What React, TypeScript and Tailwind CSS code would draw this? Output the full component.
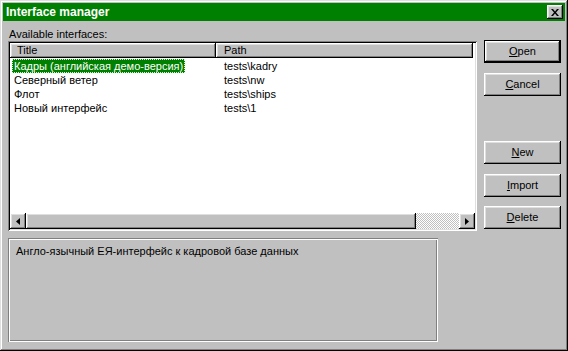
import React from 'react';

const raised =
    'shadow-[inset_-1px_-1px_#000,inset_1px_1px_#fff,inset_-2px_-2px_#808080,inset_2px_2px_#dfdfdf]';
const sunken =
    'shadow-[inset_1px_1px_#808080,inset_-1px_-1px_#fff,inset_2px_2px_#000,inset_-2px_-2px_#dfdfdf]';
const etched =
    'shadow-[inset_1px_1px_#808080,inset_-1px_-1px_#fff,inset_2px_2px_#fff,inset_-2px_-2px_#808080]';

const rows = [
    { title: 'Кадры (английская демо-версия)', path: 'tests\\kadry' },
    { title: 'Северный ветер', path: 'tests\\nw' },
    { title: 'Флот', path: 'tests\\ships' },
    { title: 'Новый интерфейс', path: 'tests\\1' },
];

const Button = ({ first, rest, isDefault, className }: { first: string; rest: string; isDefault?: boolean; className?: string }) => (
    <div className={`h-[23px] w-[77px] ${isDefault ? 'border border-black' : ''} ${className ?? ''}`}>
        <div className={`w-full h-full flex items-center justify-center bg-[#c0c0c0] ${raised}`}>
            <span>
                <u className="underline-offset-[1px]">{first}</u>
                {rest}
            </span>
        </div>
    </div>
);

const Arrow = ({ dir }: { dir: 'left' | 'right' }) => (
    <div className={`w-[16px] h-[16px] flex items-center justify-center bg-[#c0c0c0] ${raised}`}>
        <svg width="4" height="7" viewBox="0 0 4 7">
            {dir === 'left' ? <polygon points="4,0 4,7 0,3.5" fill="#000" /> : <polygon points="0,0 0,7 4,3.5" fill="#000" />}
        </svg>
    </div>
);

const App = () => {
    return (
        <div
            className={`w-[568px] h-[351px] bg-[#c0c0c0] p-[3px] flex flex-col text-[11px] text-black shadow-[inset_-1px_-1px_#000,inset_1px_1px_#dfdfdf,inset_-2px_-2px_#808080,inset_2px_2px_#fff]`}
            style={{ fontFamily: '"Liberation Sans", Arial, sans-serif' }}
        >
            {/* title bar */}
            <div className="h-[18px] bg-[#008000] flex items-center justify-between pl-[3px] pr-[2px]">
                <span className="text-white font-bold text-[12px]">Interface manager</span>
                <div className={`w-[16px] h-[14px] bg-[#c0c0c0] flex items-center justify-center ${raised}`}>
                    <svg width="8" height="7" viewBox="0 0 8 7">
                        <path d="M0 0h2l2 2.5L6 0h2L5 3.5 8 7H6L4 4.5 2 7H0l3-3.5z" fill="#000" />
                    </svg>
                </div>
            </div>

            <div className="flex flex-1 pl-[5px]">
                <div className="w-[469px] flex flex-col">
                    <div className="mt-[7px] h-[13px] leading-[13px] pl-[1px]">Available interfaces:</div>

                    {/* list box */}
                    <div className={`h-[190px] bg-white p-[2px] flex flex-col ${sunken}`}>
                        <div className="flex h-[15px] leading-[15px]">
                            <div className={`w-[206px] pl-[7px] bg-[#c0c0c0] ${raised}`}>Title</div>
                            <div className={`w-[257px] pl-[8px] bg-[#c0c0c0] ${raised}`}>Path</div>
                        </div>
                        <div className="flex-1 pt-[1px]">
                            {rows.map((r, i) => (
                                <div key={r.title} className="flex h-[14px] leading-[14px]">
                                    <div className="w-[206px] pl-[2px]">
                                        <span
                                            className={`inline-block px-[2px] ${
                                                i === 0
                                                    ? 'bg-[#008000] text-white outline-1 outline-dotted outline-[#d0ffd0] -outline-offset-1'
                                                    : ''
                                            }`}
                                        >
                                            {r.title}
                                        </span>
                                    </div>
                                    <div className="pl-[8px]">{r.path}</div>
                                </div>
                            ))}
                        </div>
                        {/* horizontal scrollbar */}
                        <div className="flex h-[16px]">
                            <Arrow dir="left" />
                            <div className={`w-[390px] bg-[#c0c0c0] ${raised}`} />
                            <div className="flex-1 bg-[image:repeating-conic-gradient(#c0c0c0_0_25%,#fff_0_50%)] bg-[size:2px_2px]" />
                            <Arrow dir="right" />
                        </div>
                    </div>

                    {/* description */}
                    <div className={`mt-[7px] w-[430px] h-[104px] pl-[8px] pt-[7px] leading-[13px] ${etched}`}>
                        Англо-язычный ЕЯ-интерфейс к кадровой базе данных
                    </div>
                </div>

                <div className="ml-[7px] w-[77px] flex flex-col pt-[19px]">
                    <Button first="O" rest="pen" isDefault />
                    <Button first="C" rest="ancel" className="mt-[10px]" />
                    <Button first="N" rest="ew" className="mt-[45px]" />
                    <Button first="I" rest="mport" className="mt-[10px]" />
                    <Button first="D" rest="elete" className="mt-[9px]" />
                </div>
            </div>
        </div>
    );
};

export default App;
